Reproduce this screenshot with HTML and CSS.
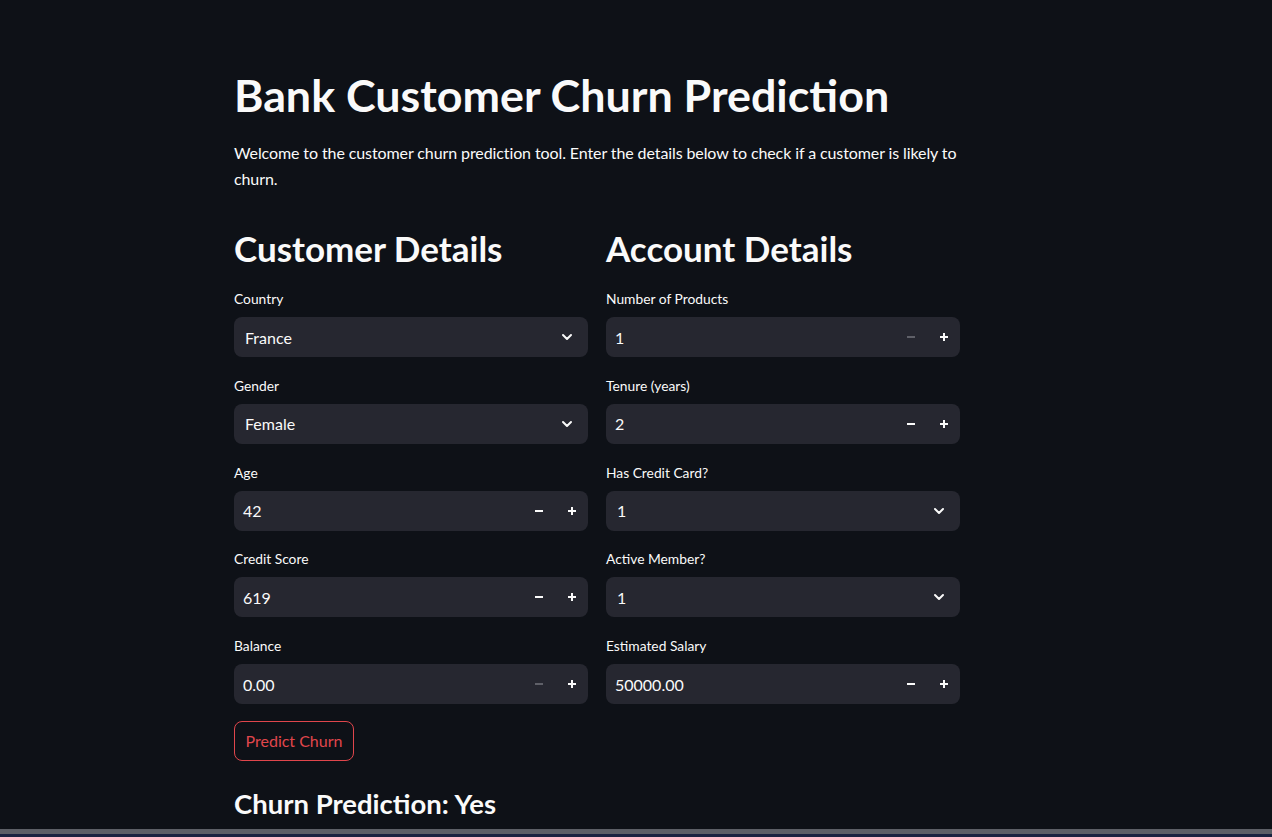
FILE: index.html
```html
<!DOCTYPE html>
<html lang="en">
<head>
<meta charset="utf-8">
<title>Bank Customer Churn Prediction</title>
<link rel="stylesheet" href="styles.css">
</head>
<body>
<main class="page">
  <h1 class="title">Bank Customer Churn Prediction</h1>
  <p class="intro">Welcome to the customer churn prediction tool. Enter the details below to check if a customer is likely to churn.</p>

  <div class="columns">
    <section class="col">
      <h2 class="section-title">Customer Details</h2>

      <div class="field">
        <label class="label">Country</label>
        <div class="select"><span class="value">France</span>
          <svg class="chev" viewBox="0 0 24 24" width="16" height="16"><path d="M6 9l6 6 6-6" fill="none" stroke="#fafafa" stroke-width="3" stroke-linecap="round" stroke-linejoin="round"/></svg>
        </div>
      </div>

      <div class="field">
        <label class="label">Gender</label>
        <div class="select"><span class="value">Female</span>
          <svg class="chev" viewBox="0 0 24 24" width="16" height="16"><path d="M6 9l6 6 6-6" fill="none" stroke="#fafafa" stroke-width="3" stroke-linecap="round" stroke-linejoin="round"/></svg>
        </div>
      </div>

      <div class="field">
        <label class="label">Age</label>
        <div class="number"><span class="value">42</span>
          <span class="step"><svg viewBox="0 0 12 12" width="12" height="12"><path d="M2 6h8" stroke="#fafafa" stroke-width="2"/></svg></span>
          <span class="step"><svg viewBox="0 0 12 12" width="12" height="12"><path d="M2 6h8M6 2v8" stroke="#fafafa" stroke-width="2"/></svg></span>
        </div>
      </div>

      <div class="field">
        <label class="label">Credit Score</label>
        <div class="number"><span class="value">619</span>
          <span class="step"><svg viewBox="0 0 12 12" width="12" height="12"><path d="M2 6h8" stroke="#fafafa" stroke-width="2"/></svg></span>
          <span class="step"><svg viewBox="0 0 12 12" width="12" height="12"><path d="M2 6h8M6 2v8" stroke="#fafafa" stroke-width="2"/></svg></span>
        </div>
      </div>

      <div class="field">
        <label class="label">Balance</label>
        <div class="number"><span class="value">0.00</span>
          <span class="step"><svg viewBox="0 0 12 12" width="12" height="12"><path d="M2 6h8" stroke="#5f6068" stroke-width="2"/></svg></span>
          <span class="step"><svg viewBox="0 0 12 12" width="12" height="12"><path d="M2 6h8M6 2v8" stroke="#fafafa" stroke-width="2"/></svg></span>
        </div>
      </div>

      <button class="btn" type="button">Predict Churn</button>
    </section>

    <section class="col">
      <h2 class="section-title">Account Details</h2>

      <div class="field">
        <label class="label">Number of Products</label>
        <div class="number"><span class="value">1</span>
          <span class="step"><svg viewBox="0 0 12 12" width="12" height="12"><path d="M2 6h8" stroke="#5f6068" stroke-width="2"/></svg></span>
          <span class="step"><svg viewBox="0 0 12 12" width="12" height="12"><path d="M2 6h8M6 2v8" stroke="#fafafa" stroke-width="2"/></svg></span>
        </div>
      </div>

      <div class="field">
        <label class="label">Tenure (years)</label>
        <div class="number"><span class="value">2</span>
          <span class="step"><svg viewBox="0 0 12 12" width="12" height="12"><path d="M2 6h8" stroke="#fafafa" stroke-width="2"/></svg></span>
          <span class="step"><svg viewBox="0 0 12 12" width="12" height="12"><path d="M2 6h8M6 2v8" stroke="#fafafa" stroke-width="2"/></svg></span>
        </div>
      </div>

      <div class="field">
        <label class="label">Has Credit Card?</label>
        <div class="select"><span class="value">1</span>
          <svg class="chev" viewBox="0 0 24 24" width="16" height="16"><path d="M6 9l6 6 6-6" fill="none" stroke="#fafafa" stroke-width="3" stroke-linecap="round" stroke-linejoin="round"/></svg>
        </div>
      </div>

      <div class="field">
        <label class="label">Active Member?</label>
        <div class="select"><span class="value">1</span>
          <svg class="chev" viewBox="0 0 24 24" width="16" height="16"><path d="M6 9l6 6 6-6" fill="none" stroke="#fafafa" stroke-width="3" stroke-linecap="round" stroke-linejoin="round"/></svg>
        </div>
      </div>

      <div class="field">
        <label class="label">Estimated Salary</label>
        <div class="number"><span class="value">50000.00</span>
          <span class="step"><svg viewBox="0 0 12 12" width="12" height="12"><path d="M2 6h8" stroke="#fafafa" stroke-width="2"/></svg></span>
          <span class="step"><svg viewBox="0 0 12 12" width="12" height="12"><path d="M2 6h8M6 2v8" stroke="#fafafa" stroke-width="2"/></svg></span>
        </div>
      </div>
    </section>
  </div>

  <h3 class="result">Churn Prediction: Yes</h3>
</main>
<div class="taskbar"></div>
</body>
</html>
```

FILE: styles.css
```css
html, body {
  margin: 0;
  padding: 0;
  background: #0e1117;
  color: #fafafa;
  font-family: Lato, "Noto Sans", sans-serif;
  height: 100%;
  overflow: hidden;
}

.page {
  width: 726px;
  margin: 0 auto;
  padding-top: 68px;
  position: relative;
  left: -39px;
}

.title {
  margin: 0;
  font-size: 44.8px;
  font-weight: 700;
  line-height: 54px;
}

.intro {
  margin: 18px 0 0;
  font-size: 16px;
  line-height: 26px;
  letter-spacing: -0.1px;
}

.columns {
  display: flex;
  gap: 18px;
  margin-top: 34px;
}

.col {
  flex: 1;
  display: flex;
  flex-direction: column;
  align-items: flex-start;
}

.section-title {
  margin: 0 0 18px;
  font-size: 35px;
  font-weight: 700;
  line-height: 44px;
}

.field {
  width: 100%;
  margin-bottom: 17.75px;
}

.label {
  display: block;
  font-size: 13.8px;
  line-height: 21px;
  margin-bottom: 8px;
}

.select,
.number {
  height: 40px;
  background: #262730;
  border-radius: 8px;
  display: flex;
  align-items: center;
  box-sizing: border-box;
  font-size: 16px;
}

.select {
  padding: 0 13px 0 11px;
}

.number {
  padding-left: 9px;
  padding-right: 0;
}

.value {
  flex: 1;
}

.chev {
  display: block;
}

.step {
  width: 34px;
  height: 40px;
  display: flex;
  align-items: center;
  justify-content: center;
}

.step:last-child {
  width: 32px;
}

.step svg {
  display: block;
}

.btn {
  margin-top: -1px;
  height: 40px;
  width: 120px;
  background: transparent;
  border: 1px solid #e0464c;
  border-radius: 8px;
  color: #e0464c;
  font-family: inherit;
  font-size: 16px;
  padding: 0;
}

.result {
  margin: 25px 0 0;
  font-size: 27.5px;
  font-weight: 700;
  line-height: 36px;
}

.taskbar {
  position: fixed;
  left: 0;
  right: 0;
  bottom: 0;
  height: 8px;
  background: linear-gradient(#5c5f66 0 5px, #1a2340 5px 8px);
}
```
